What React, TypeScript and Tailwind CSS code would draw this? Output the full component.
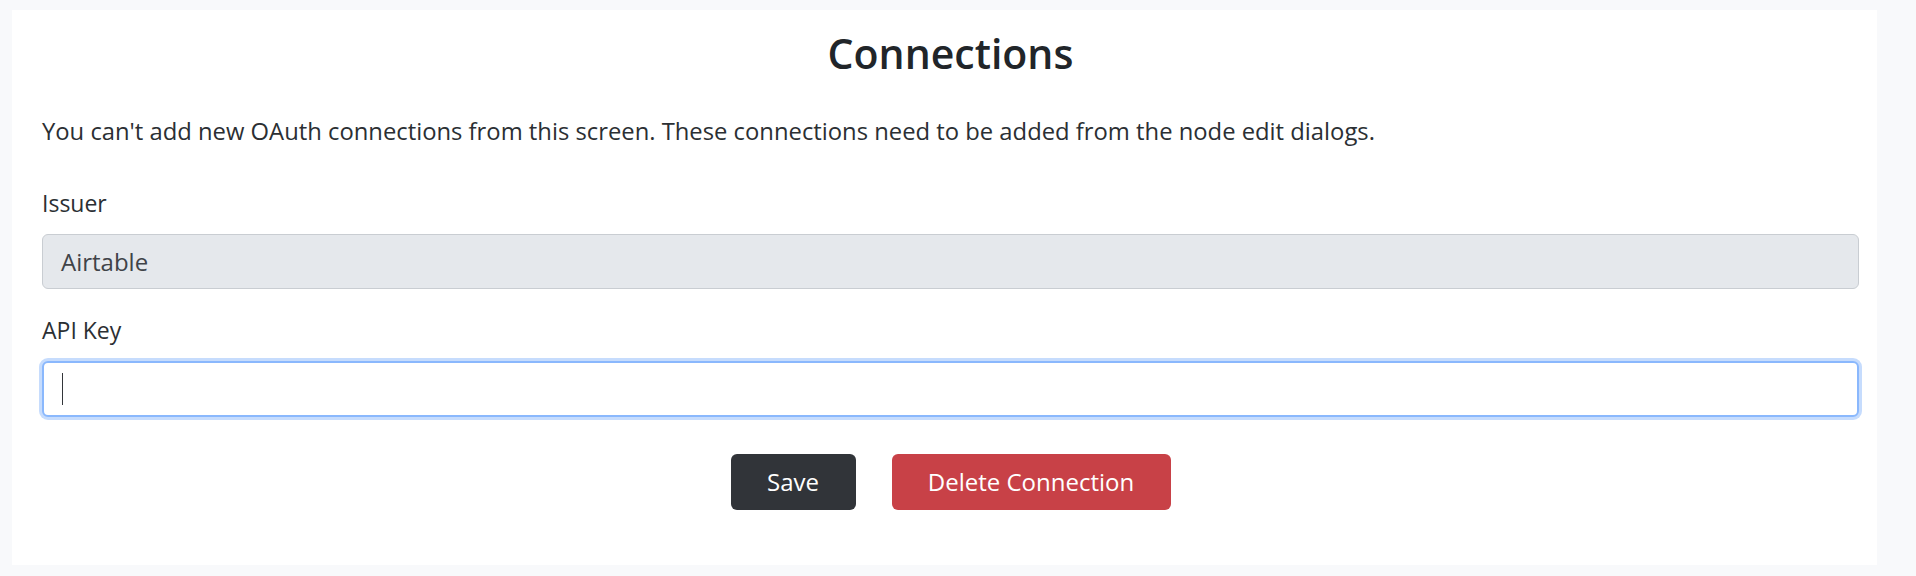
import React from 'react';

const App: React.FC = () => {
  return (
    <div className="min-h-screen bg-[#f8f9fb] pt-[10px] pl-[12px] font-['Open_Sans',sans-serif]">
      <div className="w-[1865px] bg-white pt-[19px] pb-[55px] pl-[30px] pr-[18px]">
        {/* Title */}
        <h3 className="text-center text-[41px] font-semibold leading-[1.2] text-[#212529]">
          Connections
        </h3>

        {/* Notice */}
        <p className="mt-[34px] text-[23.8px] leading-[39px] text-[#2b2f33]">
          You can't add new OAuth connections from this screen. These connections need to be added from the node edit dialogs.
        </p>

        {/* Issuer */}
        <label className="mt-[34px] block text-[23px] leading-[36px] text-[#2b2f33]">Issuer</label>
        <div className="mt-[13px] flex h-[55px] items-center rounded-[6px] border border-[#c9cdd2] bg-[#e5e8ec] pl-[18px] text-[24px] text-[#3f4348]">
          Airtable
        </div>

        {/* API Key */}
        <label className="mt-[23px] block text-[23px] leading-[36px] text-[#2b2f33]">API Key</label>
        <div className="mt-[13px] flex h-[56px] items-center rounded-[6px] border-2 border-[#8ab8fd] bg-white pl-[18px] shadow-[0_0_0_3px_#c6dcfd]">
          <span className="block h-[32px] w-px bg-[#33363a]" />
        </div>

        {/* Actions */}
        <div className="mt-[37px] flex justify-center gap-[36px]">
          <button className="flex h-[56px] w-[125px] items-center justify-center rounded-[6px] bg-[#313439] text-[24px] text-white">
            Save
          </button>
          <button className="flex h-[56px] w-[279px] items-center justify-center rounded-[6px] bg-[#c84147] text-[24px] text-white">
            Delete Connection
          </button>
        </div>
      </div>
    </div>
  );
};

export default App;
